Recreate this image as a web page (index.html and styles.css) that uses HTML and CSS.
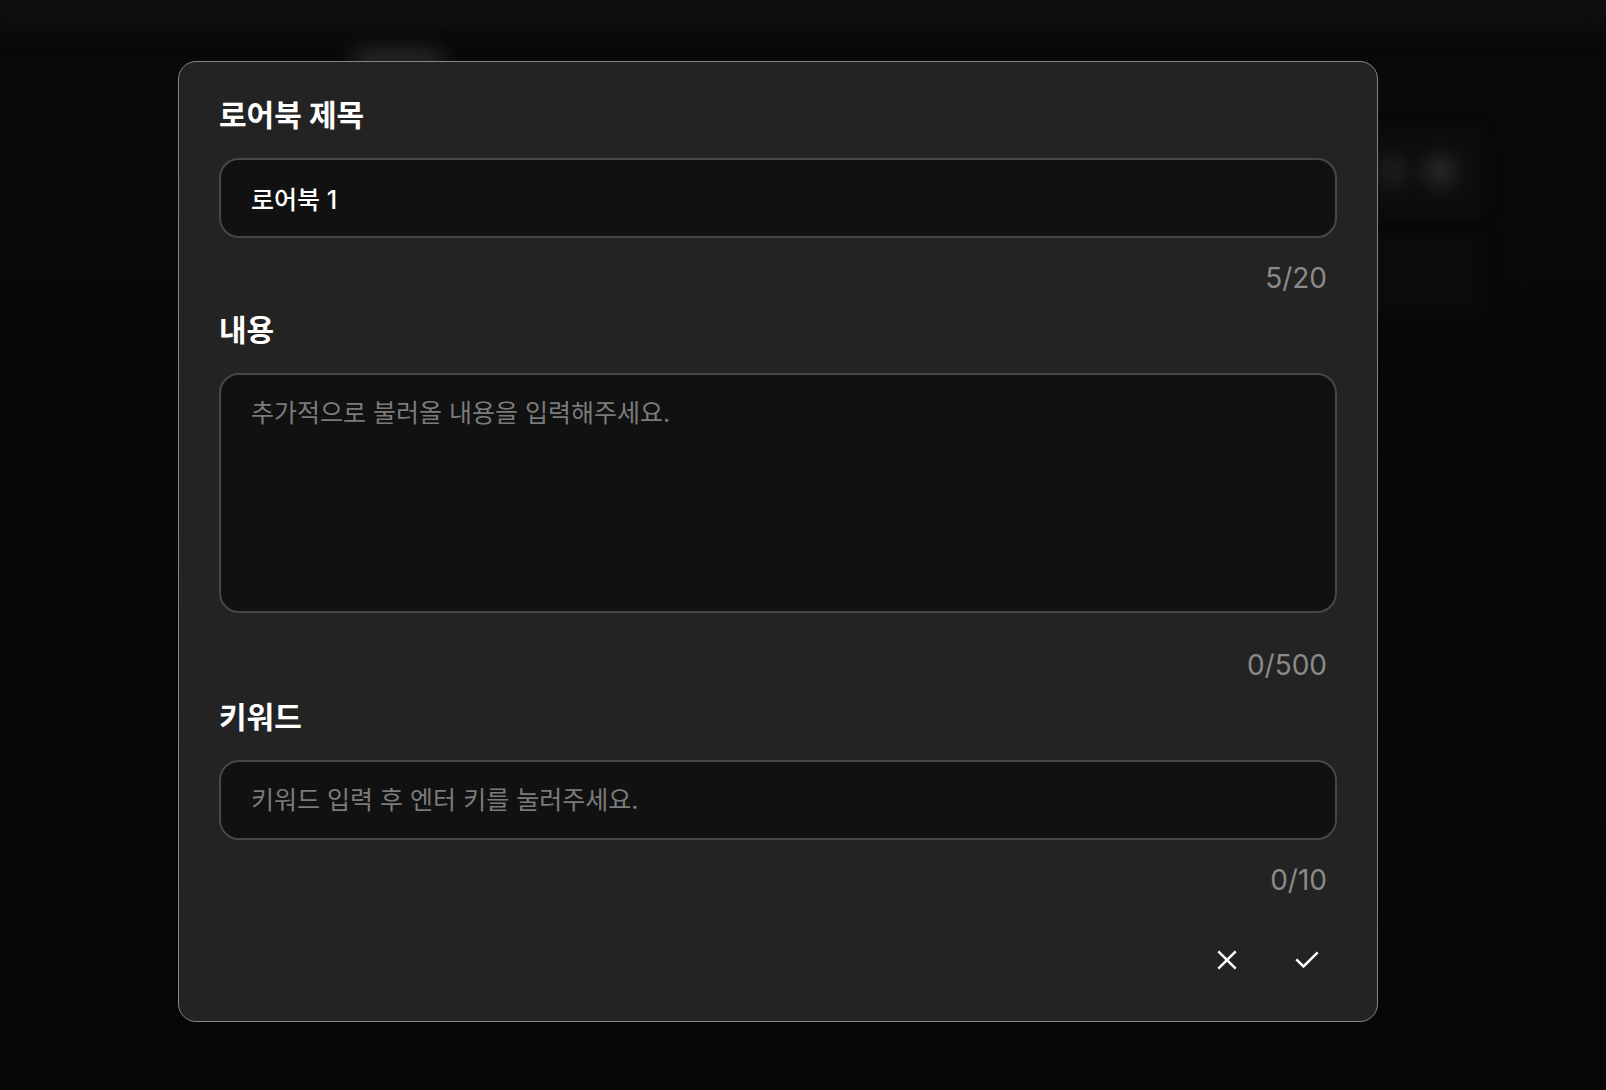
FILE: index.html
```html
<!DOCTYPE html>
<html lang="ko">
<head>
<meta charset="utf-8">
<title>로어북</title>
<link rel="stylesheet" href="styles.css">
</head>
<body>
<div class="backdrop" aria-hidden="true">
  <div class="blur-top"></div>
  <div class="blur-tab"></div>
  <div class="blur-card">
    <span class="blur-dot dot-a"></span>
    <span class="blur-dot dot-b"></span>
  </div>
  <div class="blur-card blur-card-2"></div>
</div>
<main class="page">
  <form class="modal">
    <section class="field">
      <label class="label" for="title">로어북 제목</label>
      <input class="box input value" id="title" type="text" value="로어북 1">
      <div class="counter">5/20</div>
    </section>
    <section class="field">
      <label class="label" for="content">내용</label>
      <textarea class="box area" id="content" placeholder="추가적으로 불러올 내용을 입력해주세요."></textarea>
      <div class="counter counter-area">0/500</div>
    </section>
    <section class="field">
      <label class="label" for="keyword">키워드</label>
      <input class="box input" id="keyword" type="text" placeholder="키워드 입력 후 엔터 키를 눌러주세요.">
      <div class="counter">0/10</div>
    </section>
    <div class="actions">
      <button class="icon-btn" type="button" aria-label="취소">
        <svg width="40" height="40" viewBox="0 0 40 40"><path d="M11.3 11.3 L28.7 28.7 M28.7 11.3 L11.3 28.7" stroke="#fff" stroke-width="2.5" fill="none"/></svg>
      </button>
      <button class="icon-btn" type="button" aria-label="확인">
        <svg width="40" height="40" viewBox="0 0 40 40"><path d="M9.3 19.3 L16.5 26.5 L30.7 12.3" stroke="#fff" stroke-width="2.5" fill="none"/></svg>
      </button>
    </div>
  </form>
</main>
</body>
</html>
```

FILE: styles.css
```css
* { box-sizing: border-box; }

html, body {
  margin: 0;
  height: 100%;
}

body {
  background: linear-gradient(to bottom, #121212 0px, #090909 36px, #060606 100%);
  font-family: Inter, "Noto Sans CJK KR", "Noto Sans", sans-serif;
  color: #ffffff;
  overflow: hidden;
  position: relative;
}

.backdrop {
  position: absolute;
  inset: 0;
  z-index: 0;
  pointer-events: none;
}

.blur-top {
  position: absolute;
  left: 0; right: 0; top: 0;
  height: 28px;
  background: #0e0e0e;
  filter: blur(12px);
}

.blur-tab {
  position: absolute;
  left: 352px;
  top: 50px;
  width: 92px;
  height: 20px;
  border-radius: 10px;
  background: #2c2c2c;
  filter: blur(10px);
}

.blur-card {
  position: absolute;
  left: 1330px;
  top: 128px;
  width: 155px;
  height: 88px;
  border-radius: 10px;
  background: #0d0d0d;
  filter: blur(6px);
}

.blur-card-2 {
  top: 234px;
  height: 78px;
  background: #0b0b0b;
}

.blur-dot {
  position: absolute;
  top: 26px;
  width: 34px;
  height: 34px;
  border-radius: 50%;
  background: #262626;
  filter: blur(7px);
}
.dot-a { left: 46px; background: #1c1c1c; }
.dot-b { left: 93px; }

.page {
  position: relative;
  z-index: 1;
  padding: 61px 0 0 178px;
}

.modal {
  width: 1200px;
  background: #232323;
  border: 1px solid #858585;
  border-radius: 18px;
  padding: 33px 40px 41px;
  display: flex;
  flex-direction: column;
}

.field {
  display: flex;
  flex-direction: column;
}

.field + .field { margin-top: 12px; }

.label {
  font-size: 30px;
  line-height: 40px;
  font-weight: 700;
  color: #ffffff;
  margin-bottom: 23px;
}

.box {
  display: block;
  width: 100%;
  background: #111111;
  border: 2px solid #474747;
  border-radius: 20px;
  font-family: inherit;
  font-size: 25px;
  letter-spacing: 0;
  color: #ffffff;
  outline: none;
  margin: 0;
}

.box::placeholder {
  color: #7b7b7b;
  opacity: 1;
}

.value { font-weight: 500; }

.input {
  height: 80px;
  padding: 0 30px;
}

.area {
  height: 240px;
  padding: 21px 30px;
  line-height: 34px;
  resize: none;
}

.counter {
  margin-top: 20px;
  padding-right: 10px;
  text-align: right;
  font-size: 28px;
  line-height: 40px;
  color: #8a8a8a;
}

.counter-area { margin-top: 32px; }

.actions {
  margin-top: 40px;
  padding-right: 10px;
  display: flex;
  justify-content: flex-end;
  gap: 40px;
}

.icon-btn {
  width: 40px;
  height: 40px;
  padding: 0;
  border: 0;
  background: transparent;
  display: flex;
  align-items: center;
  justify-content: center;
  cursor: pointer;
}

.icon-btn svg { display: block; }
```
